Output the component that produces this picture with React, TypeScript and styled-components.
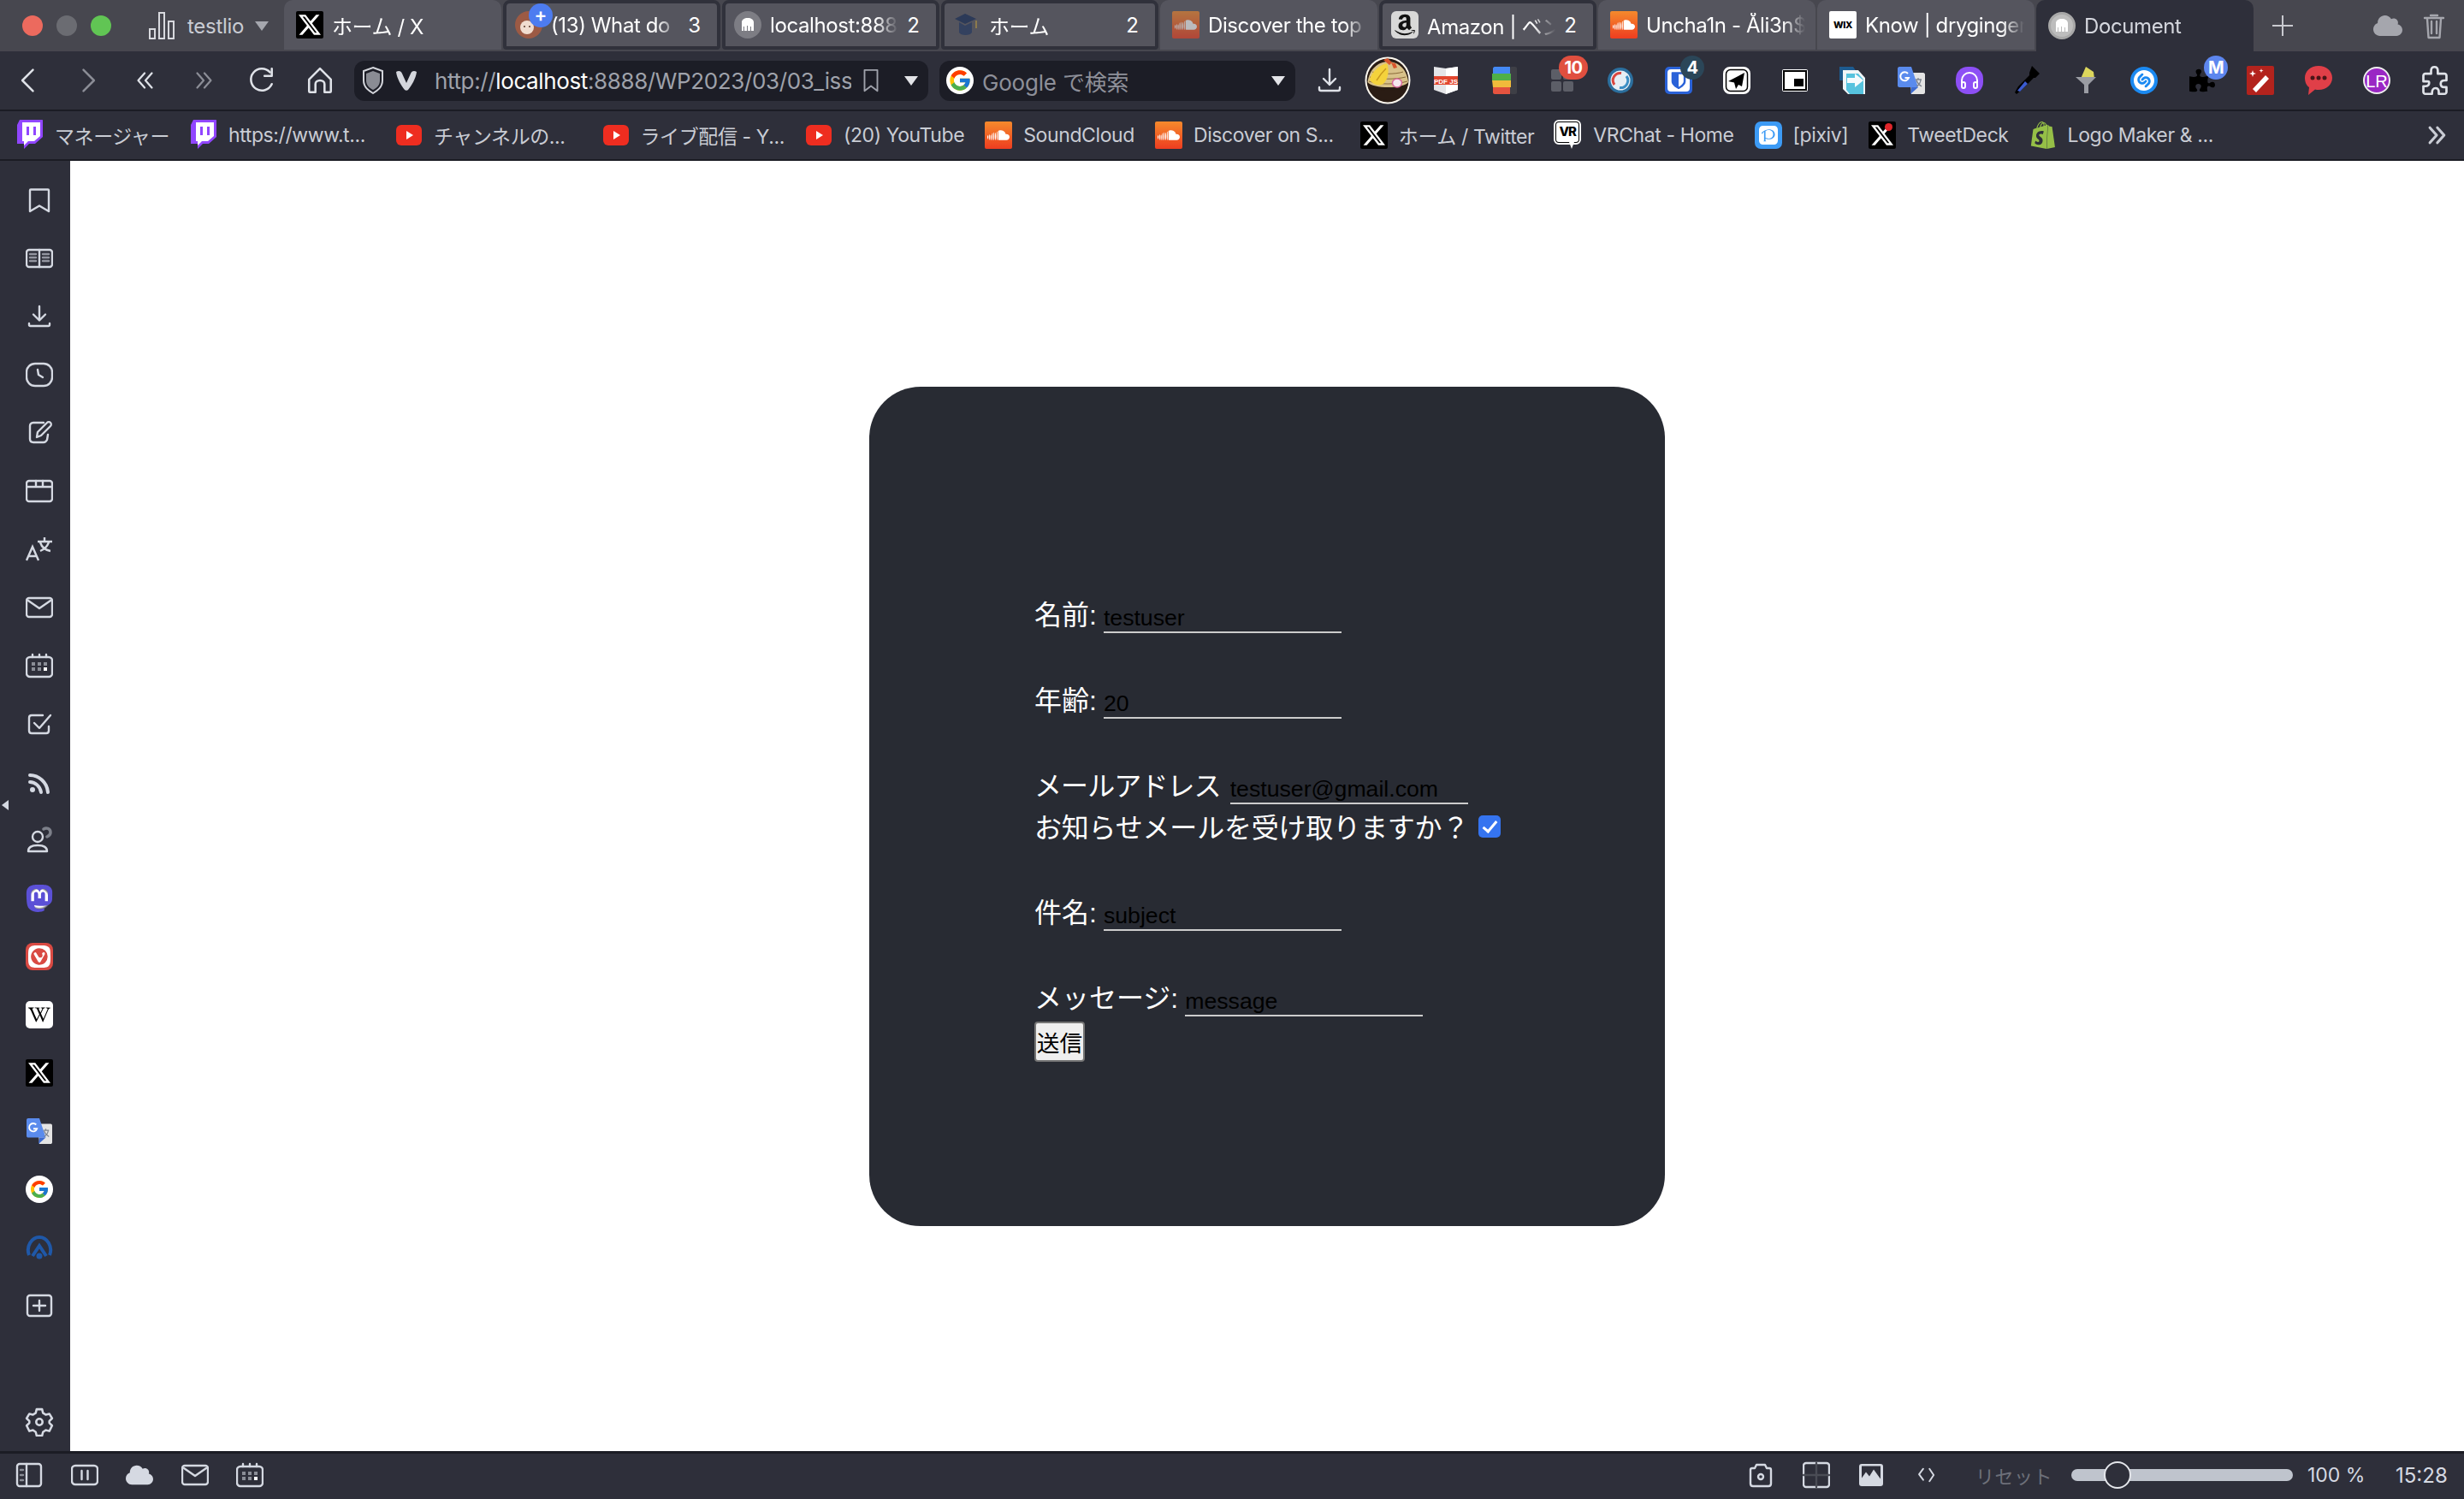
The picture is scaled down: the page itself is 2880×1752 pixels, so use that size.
import React from 'react';
import styled, { createGlobalStyle } from 'styled-components';
import { FcGoogle } from 'react-icons/fc';
import { FaAmazon, FaWikipediaW, FaPuzzlePiece, FaCloud } from 'react-icons/fa';
import { SiBitwarden, SiMastodon, SiPixiv, SiShazam, SiShopify, SiSoundcloud, SiVivaldi, SiX } from 'react-icons/si';

const GlobalStyle = createGlobalStyle`
    html, body { margin: 0; padding: 0; background: #fff; }
    body { font-family: Inter, "Noto Sans CJK JP", sans-serif; }
`;

const Root = styled.div`
    width: 2880px;
    height: 1752px;
    display: flex;
    flex-direction: column;
    overflow: hidden;
    background: #2e2f3a;
`;

/* tab strip */
const TabStrip = styled.div`
    height: 60px;
    flex: none;
    display: flex;
    gap: 2px;
    background: #47474f;
    color: #fff;
`;

const Lead = styled.div`
    width: 330px;
    flex: none;
    display: flex;
    align-items: center;
    padding-left: 26px;
    box-sizing: border-box;
`;

const Light = styled.span<{ $color: string }>`
    width: 24px;
    height: 24px;
    border-radius: 50%;
    margin-right: 16px;
    background: ${({ $color }) => $color};
`;

const WorkspaceBars = styled.svg`
    margin-left: 28px;
    flex: none;
`;

const WorkspaceName = styled.span`
    font-size: 24px;
    color: #c9ccd3;
    margin: 0 13px 0 15px;
    letter-spacing: -0.3px;
`;

const Caret = styled.span<{ $color?: string; $left?: number }>`
    width: 0;
    height: 0;
    margin-left: ${({ $left }) => $left || 0}px;
    border-left: 8px solid transparent;
    border-right: 8px solid transparent;
    border-top: 11px solid ${({ $color }) => $color || '#a5a7ae'};
    flex: none;
`;

const Tab = styled.div<{ $active?: boolean; $stack?: boolean }>`
    width: 254px;
    height: ${({ $active }) => ($active ? 60 : 58)}px;
    flex: none;
    box-sizing: border-box;
    display: flex;
    align-items: center;
    gap: 10px;
    position: relative;
    padding: 0 ${({ $stack }) => ($stack ? '19px' : '12px')} 0 ${({ $stack }) => ($stack ? '10px' : '14px')};
    border-radius: ${({ $stack }) => ($stack ? '8px 8px 4px 4px' : '10px 10px 0 0')};
    background: ${({ $active }) => ($active ? '#2e2f3a' : '#55555e')};
    border: ${({ $stack }) => ($stack ? '4px solid #30313b' : 'none')};
`;

const TabTitle = styled.span<{ $active?: boolean }>`
    flex: 1;
    min-width: 0;
    overflow: hidden;
    white-space: nowrap;
    font-size: 24px;
    letter-spacing: -0.4px;
    color: ${({ $active }) => ($active ? '#d5d7de' : '#fff')};
    -webkit-mask-image: linear-gradient(to right, #000 calc(100% - 26px), transparent 100%);
    mask-image: linear-gradient(to right, #000 calc(100% - 26px), transparent 100%);
`;

const TabCount = styled.span`
    font-size: 24px;
    color: #fff;
`;

const TabEnd = styled.div`
    flex: 1;
    display: flex;
    align-items: center;
    color: #cfd0d5;
`;

const PlusSign = styled.span`
    width: 32px;
    margin-left: 16px;
    display: flex;
    justify-content: center;
`;

const EndIcon = styled.span<{ $left: number }>`
    margin-left: ${({ $left }) => $left}px;
    display: flex;
    color: #a5a6ad;
`;

const PlusBadge = styled.span`
    position: absolute;
    left: 26px;
    top: 0;
    width: 28px;
    height: 28px;
    border-radius: 50%;
    background: #4d7cf0;
    color: #fff;
    font-size: 22px;
    line-height: 26px;
    text-align: center;
    font-weight: 600;
`;

/* favicons */
const Fav = styled.span<{ $bg?: string; $color?: string; $radius?: string; $dim?: boolean; $height?: number; $ring?: boolean }>`
    width: 32px;
    height: ${({ $height }) => $height || 32}px;
    flex: none;
    position: relative;
    box-sizing: border-box;
    display: inline-flex;
    align-items: center;
    justify-content: center;
    overflow: hidden;
    background: ${({ $bg }) => $bg || 'transparent'};
    color: ${({ $color }) => $color || '#fff'};
    border-radius: ${({ $radius }) => $radius || '2px'};
    border: ${({ $ring }) => ($ring ? '3px solid #a8a8a8' : 'none')};
    opacity: ${({ $dim }) => ($dim ? 0.6 : 1)};
`;

const WixMark = styled.span`
    font-size: 11px;
    font-weight: 800;
    color: #000;
    letter-spacing: -0.4px;
`;

const DotMark = styled.span`
    position: absolute;
    right: 4px;
    top: 2px;
    width: 9px;
    height: 9px;
    border-radius: 50%;
    background: #e0262b;
`;

const XFav = ({ dot }: { dot?: boolean }) => (
    <Fav $bg="#000">
        <SiX size={26} />
        {dot ? <DotMark /> : null}
    </Fav>
);

const Soundcloud = ({ dim }: { dim?: boolean }) => (
    <Fav $bg="linear-gradient(#f58a2c, #ee3d20)" $dim={dim}>
        <SiSoundcloud size={26} />
    </Fav>
);

const Elephant = ({ active }: { active?: boolean }) => (
    <Fav $radius="50%" $bg={active ? '#bdbdbd' : '#7d7d84'} $ring={active}>
        <svg width="20" height="20" viewBox="0 0 20 20" fill="#fff">
            <path d="M3 17V7c0-3 3-5 7-5s7 2 7 5v10h-3v-5h-1v5h-3v-6H9v6H6v-5H5v5z" />
        </svg>
    </Fav>
);

const GradCap = () => (
    <Fav>
        <svg width="32" height="32" viewBox="0 0 32 32">
            <path d="M2 9l12-6 13 6-13 6z" fill="#2c3a58" />
            <path d="M7 13l7 4 8-4v12c-2 4-13 4-15 0z" fill="#33415f" />
            <path d="M27 11v9" stroke="#8c7a4c" strokeWidth="2" />
        </svg>
    </Fav>
);

const Twitch = () => (
    <Fav $height={36} $color="#9146ff">
        <svg width="30" height="36" viewBox="0 0 30 36">
            <path d="M3 0h27v20l-9 8h-7l-6 6v-6H0V6z" fill="#9146ff" />
            <path d="M6 3h21v16l-7 6h-7l-5 5v-5H6z" fill="#fff" />
            <path d="M11 8h3v10h-3zM19 8h3v10h-3z" fill="#9146ff" />
        </svg>
    </Fav>
);

const YouTube = () => (
    <Fav>
        <svg width="30" height="24" viewBox="0 0 30 24">
            <rect width="30" height="24" rx="6" fill="#ee2d20" />
            <path d="M12 7l8 5-8 5z" fill="#fff" />
        </svg>
    </Fav>
);

const VrFav = styled.span`
    width: 32px;
    height: 34px;
    flex: none;
    position: relative;
    display: flex;
    align-items: flex-start;
`;

const VrMark = styled.span`
    width: 30px;
    height: 27px;
    box-sizing: border-box;
    border: 2px solid #000;
    outline: 2px solid #fff;
    outline-offset: -1px;
    border-radius: 5px;
    background: #fff;
    color: #000;
    font-size: 15px;
    font-weight: 800;
    line-height: 22px;
    text-align: center;
    letter-spacing: -1px;
    &::after {
        content: '';
        position: absolute;
        left: 17px;
        top: 25px;
        border-left: 3px solid transparent;
        border-right: 3px solid transparent;
        border-top: 8px solid #fff;
    }
`;

/* toolbar */
const Toolbar = styled.div`
    height: 68px;
    flex: none;
    display: flex;
    align-items: center;
    border-bottom: 2px solid #1b1c24;
    background: #2e2f3a;
`;

const ToolCell = styled.span<{ $dim?: boolean; $left?: number }>`
    width: 68px;
    height: 68px;
    margin-left: ${({ $left }) => $left || 0}px;
    flex: none;
    position: relative;
    display: flex;
    align-items: center;
    justify-content: center;
    color: ${({ $dim }) => ($dim ? '#8b8d96' : '#dfe2e8')};
`;

const ToolBadge = styled.span<{ $bg: string; $wide?: boolean }>`
    position: absolute;
    top: 5px;
    right: 4px;
    width: ${({ $wide }) => ($wide ? 34 : 28)}px;
    height: 28px;
    border-radius: 14px;
    background: ${({ $bg }) => $bg};
    color: #fff;
    font-size: 20px;
    font-weight: 700;
    line-height: 28px;
    text-align: center;
    letter-spacing: -0.5px;
`;

const Field = styled.div<{ $width: number; $left: number }>`
    width: ${({ $width }) => $width}px;
    height: 47px;
    margin-left: ${({ $left }) => $left}px;
    flex: none;
    display: flex;
    align-items: center;
    box-sizing: border-box;
    padding: 0 12px 0 8px;
    border-radius: 12px;
    background: #1c1d26;
    font-size: 26px;
    letter-spacing: -0.2px;
    color: #9fa2ab;
`;

const ShieldIcon = styled.svg`
    flex: none;
`;

const VivaldiMark = styled.svg`
    flex: none;
    margin-left: 12px;
`;

const UrlText = styled.div`
    flex: 1;
    min-width: 0;
    margin: 0 8px 0 20px;
    overflow: hidden;
    white-space: nowrap;
    letter-spacing: -0.38px;
`;

const UrlHost = styled.span`
    color: #fff;
`;

const SearchHint = styled.div`
    flex: 1;
    margin-left: 10px;
    color: #8e9099;
`;

/* bookmarks */
const BookmarkBar = styled.div`
    height: 58px;
    flex: none;
    display: flex;
    align-items: center;
    gap: 24px;
    padding-left: 19px;
    background: #2e2f3a;
    position: relative;
    box-sizing: border-box;
    border-bottom: 2px solid #1b1c24;
`;

const Bookmark = styled.div<{ $trail?: number }>`
    display: flex;
    align-items: center;
    gap: 13px;
    flex: none;
    margin-right: ${({ $trail }) => $trail || 0}px;
    font-size: 23px;
    letter-spacing: -0.4px;
    color: #c9ccd4;
    white-space: nowrap;
`;

const MoreMarks = styled.span`
    position: absolute;
    right: 18px;
    top: 14px;
    color: #c9ccd4;
    display: flex;
`;

/* page */
const Middle = styled.div`
    flex: 1;
    min-height: 0;
    display: flex;
`;

const Sidebar = styled.div`
    width: 82px;
    flex: none;
    position: relative;
    display: flex;
    flex-direction: column;
    align-items: center;
    padding: 12px 0 0 10px;
    box-sizing: border-box;
    background: #2e2f3a;
    color: #d5d9e2;
`;

const SideCell = styled.span`
    width: 40px;
    height: 68px;
    flex: none;
    display: flex;
    align-items: center;
    justify-content: center;
`;

const SideBottom = styled(SideCell)`
    margin-top: auto;
`;

const CollapseArrow = styled.span`
    position: absolute;
    left: 2px;
    top: 747px;
    width: 0;
    height: 0;
    border-top: 6px solid transparent;
    border-bottom: 6px solid transparent;
    border-right: 8px solid #d5d9e2;
`;

const Page = styled.main`
    flex: 1;
    display: flex;
    align-items: center;
    justify-content: center;
    background: #fff;
`;

const Card = styled.div`
    width: 930px;
    height: 981px;
    margin-top: 1px;
    box-sizing: border-box;
    padding: 252px 0 0 193px;
    border-radius: 60px;
    background: #282b33;
    color: #fff;
    font-family: "Liberation Sans", "Noto Sans CJK JP", sans-serif;
    font-size: 32px;
`;

const Row = styled.label<{ $gap?: number }>`
    height: 36px;
    display: flex;
    align-items: flex-end;
    margin-bottom: ${({ $gap }) => ($gap === undefined ? 64 : $gap)}px;
    white-space: nowrap;
`;

const Caption = styled.span<{ $tight?: boolean }>`
    line-height: 36px;
    position: relative;
    top: -3px;
    letter-spacing: ${({ $tight }) => ($tight ? '-0.9px' : '0')};
`;

const TextInput = styled.input<{ $left?: number }>`
    width: 278px;
    height: 34px;
    margin: 0 0 0 ${({ $left }) => ($left === undefined ? 8 : $left)}px;
    padding: 0;
    box-sizing: border-box;
    border: 0;
    border-bottom: 2px solid #ccc;
    outline: 0;
    background: transparent;
    color: #000;
    font-family: "Liberation Sans", sans-serif;
    font-size: 26.67px;
    line-height: 32px;
`;

const CheckRow = styled.label`
    height: 48px;
    box-sizing: border-box;
    padding-top: 2px;
    display: flex;
    align-items: center;
    margin-bottom: 64px;
    white-space: nowrap;
    letter-spacing: -0.2px;
`;

const CheckBox = styled.input`
    appearance: none;
    width: 26px;
    height: 26px;
    margin: 2px 0 0 11px;
    border-radius: 5px;
    background: #3574f0;
    position: relative;
    &::after {
        content: '';
        position: absolute;
        left: 9px;
        top: 3px;
        width: 6px;
        height: 14px;
        border: solid #fff;
        border-width: 0 3px 3px 0;
        transform: rotate(40deg);
    }
`;

const SendButton = styled.button`
    display: block;
    width: 59px;
    height: 47px;
    margin-top: 6px;
    padding: 0;
    box-sizing: border-box;
    border: 2px solid #767676;
    border-radius: 4px;
    background: #efefef;
    color: #000;
    font-family: "Liberation Sans", "Noto Sans CJK JP", sans-serif;
    font-size: 26.67px;
`;

/* status bar */
const StatusBar = styled.div`
    height: 56px;
    flex: none;
    display: flex;
    align-items: center;
    box-sizing: border-box;
    padding: 0 0 3px 2px;
    border-top: 3px solid #1b1c24;
    background: #2e2f3a;
    color: #d5d9e2;
`;

const StatusCell = styled.span`
    width: 64.5px;
    flex: none;
    display: flex;
    justify-content: center;
`;

const StatusSpacer = styled.span`
    flex: 1;
`;

const ResetLabel = styled.span`
    width: 87px;
    margin: 0 25px;
    font-size: 22px;
    letter-spacing: 0.5px;
    color: #6d6f79;
    white-space: nowrap;
`;

const ZoomTrack = styled.span`
    width: 259px;
    height: 14px;
    flex: none;
    position: relative;
    border-radius: 7px;
    background: #bfc4cd;
`;

const ZoomThumb = styled.span`
    position: absolute;
    left: 38px;
    top: -9px;
    width: 32px;
    height: 32px;
    box-sizing: border-box;
    border-radius: 50%;
    border: 2px solid #e4e6eb;
    background: #2e2f3a;
`;

const ZoomValue = styled.span`
    margin-left: 17px;
    width: 103px;
    font-size: 23px;
    flex: none;
`;

const Clock = styled.span`
    width: 80px;
    font-size: 24px;
    flex: none;
`;

/* line icons, all drawn on a 32 box */
const Line = ({ children, size = 32, width = 2.4 }: { children: React.ReactNode; size?: number; width?: number }) => (
    <svg width={size} height={size} viewBox="0 0 32 32" fill="none" stroke="currentColor" strokeWidth={width} strokeLinecap="round" strokeLinejoin="round">
        {children}
    </svg>
);

const CalendarIcon = () => (
    <Line>
        <rect x="1" y="6" width="30" height="23" rx="4" />
        <path d="M8 3v3M16 3v3M24 3v3" />
        <path d="M7 14h4M14 14h4M21 14h4M7 20h4M14 20h4" stroke="#8a8d96" strokeWidth="4" strokeLinecap="butt" />
        <path d="M21 20h4" stroke="#fff" strokeWidth="4" strokeLinecap="butt" />
    </Line>
);

const MailIcon = () => (
    <Line>
        <rect x="1" y="5" width="30" height="22" rx="3" />
        <path d="M3 8l13 9 13-9" />
    </Line>
);

const sideIcons: React.ReactNode[] = [
    <Line key="bookmark"><path d="M6 3.500h20c.6 0 1 .4 1 1V29l-11-6.500L5 29V4.500c0-.6.4-1 1-1z" /></Line>,
    <Line key="reader"><rect x="1" y="6" width="30" height="20" rx="3" /><path d="M16 6v20" /><path d="M5 11h7M5 15h7M5 19h7M20 11h7M20 15h7M20 19h7" opacity=".6" /></Line>,
    <Line key="download"><path d="M16 4v16M9 13.500l7 7 7-7M4 24v1.500c0 1 .6 1.500 1.500 1.500h21c.9 0 1.500-.5 1.500-1.500V24" /></Line>,
    <Line key="history"><rect x="1" y="3" width="30" height="26" rx="10" /><path d="M14 10l1 6 5 3" /></Line>,
    <Line key="notes"><path d="M21 4H9C6 4 5 6 5 8v15c0 3 2 4 4 4h12c2 0 3-1 4-3l1-6" /><path d="M13 21l1-6L25 4c1-1 3-1 4 0s1 3 0 4L18 19z" /></Line>,
    <Line key="window"><rect x="1" y="4" width="30" height="24" rx="3" /><path d="M1 11h30M12 4v7M20 4v7" /></Line>,
    <svg key="translate" width="32" height="32" viewBox="0 0 32 32" fill="none" stroke="currentColor" strokeWidth="2.400"><path d="M1 29l7-16 7 16M3.500 24h9" /><path d="M14 7h17M22 2v5M17 8c2 6 6 9 12 10M27 8c-2 5-5 8-10 10" /></svg>,
    <MailIcon key="mail" />,
    <CalendarIcon key="calendar" />,
    <Line key="tasks"><path d="M20 6H7c-2 0-3 1-3 3v15c0 2 1 3 3 3h17c2 0 3-1 3-3v-5" /><path d="M10 15l6 6L29 6" /></Line>,
    <Line key="rss" width={4}><path d="M5 8c10 0 20 8 21 20M5 16c6 0 12 5 13 12" /><circle cx="8" cy="25" r="3" fill="currentColor" stroke="none" /></Line>,
    <Line key="contacts"><circle cx="14" cy="12" r="6" /><path d="M3 29c0-6 5-7 11-7s11 1 11 7z" /><path d="M21 3c3-2 8-1 8 4 0 2-2 4-4 5" stroke="#7d808a" strokeWidth="3.500" /></Line>,
];

const Translate = ({ size = 32 }: { size?: number }) => (
    <svg width={size} height={size} viewBox="0 0 32 32">
        <path d="M14 7h16c1 0 2 1 2 2v21c0 1-1 2-2 2H16z" fill="#e4e4e4" />
        <path d="M2 0h14l8 24H2c-1 0-2-1-2-2V2C0 1 1 0 2 0z" fill="#5a8bed" />
        <path d="M16 24l-1 8 9-8z" fill="#3e6bd0" />
        <path d="M12 8A5 5 0 1 0 13 13H8.500" fill="none" stroke="#fff" strokeWidth="2" />
        <path d="M21 15h7M24 13v2M22 23c3-2 5-4 5-8M22 16c1 3 3 5 6 7" fill="none" stroke="#7d8490" strokeWidth="1.300" />
    </svg>
);

const Noodle = () => (
    <svg width="54" height="56" viewBox="0 0 54 56">
        <ellipse cx="27" cy="28" rx="26.500" ry="27.500" fill="#fbf7ee" />
        <ellipse cx="27" cy="28" rx="24.500" ry="25.500" fill="#2a1c14" />
        <path d="M3.500 30c2-15 12-24 24-24s22 9 23.500 24c-6 8-41 8-47.500 0z" fill="#d8c28a" />
        <path d="M6 24c10 3 30 3 42 0M5 29c12 4 32 4 45 0M9 18c9 3 27 3 36 0" fill="none" stroke="#8a6a3a" strokeWidth="1" />
        <path d="M6 27c2-9 11-17 20-19 3 7 2 18-4 24-5 3-13 1-16-5z" fill="#f4d23c" />
        <path d="M14 28c3-5 7-10 11-14" fill="none" stroke="#c99a1f" strokeWidth="1.500" />
        <path d="M22 4l5-2 5 5-3 3zM31 7l5 1 2 5-4 1z" fill="#d8562c" />
        <ellipse cx="38" cy="31" rx="5.500" ry="5" fill="#f6e7ee" stroke="#d9689c" strokeWidth="1.500" />
        <path d="M5 35c8 6 36 6 44 0-2 9-10 16-22 16S7 44 5 35z" fill="#2a1c14" />
    </svg>
);

const PdfJs = () => (
    <svg width="30" height="34" viewBox="0 0 30 34">
        <path d="M1 1l14 2 14-2v27l-14 5-14-5z" fill="#e4e5e8" />
        <path d="M15 3l14-2v27l-14 5z" fill="#fff" />
        <rect x="1" y="12" width="28" height="10" fill="#e2472f" />
        <text x="15" y="20.500" textAnchor="middle" fontSize="8" fontWeight="700" fill="#fff" fontFamily="Liberation Sans">PDF JS</text>
    </svg>
);

const ColorStack = () => (
    <svg width="30" height="32" viewBox="0 0 30 32">
        <rect x="22" y="0" width="8" height="32" rx="2" fill="#3e3f46" />
        <path d="M2 2c0-1 1-2 2-2h18v8H2z" fill="#4489f4" />
        <path d="M1 8h22v8H1z" fill="#4fb048" />
        <path d="M1 16h22v8H2z" fill="#f1bb3b" />
        <path d="M2 24h20v8H4c-1 0-2-1-2-2z" fill="#e5533f" />
    </svg>
);

const Tiles = () => (
    <svg width="28" height="28" viewBox="0 0 28 28" fill="#5c5e67">
        <rect x="1" y="1" width="12" height="12" rx="2" />
        <rect x="15" y="1" width="12" height="12" rx="2" />
        <rect x="1" y="15" width="12" height="12" rx="2" />
        <rect x="15" y="15" width="12" height="12" rx="2" />
    </svg>
);

const RoundSync = () => (
    <svg width="32" height="32" viewBox="0 0 32 32" fill="none">
        <circle cx="16" cy="16" r="15" fill="#2b6f9e" />
        <circle cx="16" cy="16" r="11.500" fill="#e6eef4" />
        <path d="M9 21a8.500 8.500 0 0 1 8-13.500" stroke="#d9473f" strokeWidth="3" />
        <path d="M23 11a8.500 8.500 0 0 1-8 13.500" stroke="#3c8ec4" strokeWidth="3" />
    </svg>
);

const PlaneBox = () => (
    <svg width="32" height="32" viewBox="0 0 32 32">
        <rect x="1" y="1" width="30" height="30" rx="7" fill="#fff" stroke="#fff" strokeWidth="2" />
        <rect x="3.500" y="3.500" width="25" height="25" rx="5" fill="#fff" stroke="#000" strokeWidth="1.500" />
        <path d="M25 7L6 17l7 1.500L15 26l3-5 4 2z" fill="#000" />
    </svg>
);

const PipBox = () => (
    <svg width="32" height="28" viewBox="0 0 32 28">
        <rect x="1" y="1" width="30" height="26" rx="2" fill="#fff" />
        <rect x="3" y="3" width="26" height="22" fill="#fff" stroke="#000" strokeWidth="2" />
        <rect x="15" y="12" width="11" height="9" fill="#000" />
    </svg>
);

const ArrowDoc = () => (
    <svg width="32" height="32" viewBox="0 0 32 32">
        <path d="M0 0h16l4 6H4v10H0z" fill="#1d5b8f" />
        <path d="M4 4h18l8 9v19H10L4 26z" fill="#f0f6f8" />
        <path d="M8 8h14l6 7v17H12l-4-5z" fill="#56c3de" />
        <path d="M9 13h9V8l10 8-10 8v-5H9z" fill="#f4fbfd" />
    </svg>
);

const Headphones = () => (
    <svg width="22" height="22" viewBox="0 0 22 22" fill="none" stroke="#fff" strokeWidth="2">
        <path d="M2 14v-3a9 9 0 0 1 18 0v3" />
        <rect x="2" y="13" width="4" height="7" rx="2" />
        <rect x="16" y="13" width="4" height="7" rx="2" />
    </svg>
);

const Dropper = () => (
    <svg width="32" height="34" viewBox="0 0 32 34">
        <path d="M21 0l9 9-5 5-2 0L9 28l-6 5-2-2 4-7L18 11v-3z" fill="#000" />
        <path d="M13 18l3 3-9 9-3-1z" fill="#3b5bd0" />
    </svg>
);

const Funnel = () => (
    <svg width="24" height="32" viewBox="0 0 24 32">
        <path d="M12 0l9 6 1 8H6z" fill="#dcd65c" />
        <path d="M0 12h24l-9 9v10h-5V21z" fill="#9a9ca3" />
    </svg>
);

const WandBox = () => (
    <svg width="32" height="34" viewBox="0 0 32 34">
        <rect width="32" height="34" rx="2" fill="#b3231d" />
        <path d="M22 11l4 4-15 16-4-4z" fill="#fff" />
        <path d="M7 5l1 3 3 1-3 1-1 3-1-3-3-1 3-1zM17 3l.6 2 2 .6-2 .6-.6 2-.6-2-2-.6 2-.6z" fill="#fff" />
    </svg>
);

const ChatBubble = () => (
    <svg width="34" height="38" viewBox="0 0 34 38">
        <path d="M17 2c9 0 16 6 16 14s-7 14-16 14c-1 0-3 0-4-.5L5 36l1-9c-3-2-5-6-5-11C1 8 8 2 17 2z" fill="#e03f48" />
        <circle cx="10" cy="16" r="2.500" fill="#4a1518" />
        <circle cx="17" cy="16" r="2.500" fill="#4a1518" />
        <circle cx="24" cy="16" r="2.500" fill="#4a1518" />
    </svg>
);

const LrBadge = () => (
    <svg width="32" height="34" viewBox="0 0 32 34">
        <circle cx="16" cy="17" r="15" fill="#9a27c4" stroke="#eee" strokeWidth="2" />
        <text x="16" y="25" textAnchor="middle" fontSize="20" fill="#fff" fontFamily="Liberation Sans">LR</text>
    </svg>
);

const Avatar = () => (
    <Fav $radius="50%" $bg="#9c5a44">
        <svg width="32" height="32" viewBox="0 0 32 32">
            <circle cx="14" cy="19" r="8" fill="#f1ddd0" />
            <circle cx="11" cy="18" r="1" fill="#5a3a2c" />
            <circle cx="17" cy="18" r="1" fill="#5a3a2c" />
        </svg>
    </Fav>
);

interface TabData {
    title: string;
    icon: React.ReactNode;
    count?: number;
    badge?: boolean;
}

const tabs: TabData[] = [
    { title: 'ホーム / X', icon: <XFav /> },
    { title: '(13) What do', icon: <Avatar />, count: 3, badge: true },
    { title: 'localhost:888', icon: <Elephant />, count: 2 },
    { title: 'ホーム', icon: <GradCap />, count: 2 },
    { title: 'Discover the top s', icon: <Soundcloud dim /> },
    { title: 'Amazon | ベン', icon: <Fav $bg="#d8d8d8" $color="#111" $radius="6px"><FaAmazon size={28} /></Fav>, count: 2 },
    { title: 'Uncha1n - Åli3n$', icon: <Soundcloud /> },
    { title: 'Know | drygingerr', icon: <Fav $bg="#fff"><WixMark>WIX</WixMark></Fav> },
];

const bookmarks: { label: string; icon: React.ReactNode; trail?: number }[] = [
    { label: 'マネージャー', icon: <Twitch /> },
    { label: 'https://www.t...', icon: <Twitch />, trail: 11 },
    { label: 'チャンネルの...', icon: <YouTube />, trail: 19 },
    { label: 'ライブ配信 - Y...', icon: <YouTube /> },
    { label: '(20) YouTube', icon: <YouTube /> },
    { label: 'SoundCloud', icon: <Soundcloud /> },
    { label: 'Discover on S...', icon: <Soundcloud />, trail: 7 },
    { label: 'ホーム / Twitter', icon: <XFav /> },
    { label: 'VRChat - Home', icon: <VrFav><VrMark>VR</VrMark></VrFav> },
    { label: '[pixiv]', icon: <Fav $bg="#3d9bf5" $radius="7px"><SiPixiv size={22} /></Fav> },
    { label: 'TweetDeck', icon: <XFav dot /> },
    { label: 'Logo Maker & ...', icon: <Fav $color="#95bf47"><SiShopify size={32} /></Fav> },
];

const App: React.FC = () => (
    <Root>
        <GlobalStyle />
        <TabStrip>
            <Lead>
                <Light $color="#ec6a5e" />
                <Light $color="#6b6c72" />
                <Light $color="#61c554" />
                <WorkspaceBars width="30" height="32" viewBox="0 0 30 32" fill="none" stroke="#d8d9de" strokeWidth="2">
                    <rect x="1" y="20" width="6" height="11" />
                    <rect x="12" y="1" width="6" height="30" />
                    <rect x="23" y="11" width="6" height="20" />
                </WorkspaceBars>
                <WorkspaceName>testlio</WorkspaceName>
                <Caret />
            </Lead>
            {tabs.map((tab) => (
                <Tab key={tab.title} $stack={tab.count !== undefined}>
                    {tab.icon}
                    {tab.badge ? <PlusBadge>+</PlusBadge> : null}
                    <TabTitle>{tab.title}</TabTitle>
                    {tab.count !== undefined ? <TabCount>{tab.count}</TabCount> : null}
                </Tab>
            ))}
            <Tab $active>
                <Elephant active />
                <TabTitle $active>Document</TabTitle>
            </Tab>
            <TabEnd>
                <PlusSign>
                    <svg width="24" height="24" viewBox="0 0 24 24" stroke="#c9cad0" strokeWidth="2"><path d="M12 0v24M0 12h24" /></svg>
                </PlusSign>
                <EndIcon $left={90}><FaCloud size={34} /></EndIcon>
                <EndIcon $left={21}>
                    <Line><path d="M8 8l1.500 22h13L24 8M5 7h22M12 4h8M13 11v14M19 11v14" /></Line>
                </EndIcon>
            </TabEnd>
        </TabStrip>
        <Toolbar>
            <ToolCell><Line size={36} width={2.2}><path d="M20 5L9 16l11 11" /></Line></ToolCell>
            <ToolCell $dim><Line size={36} width={2.2}><path d="M12 5l11 11-11 11" /></Line></ToolCell>
            <ToolCell><Line size={30}><path d="M15 7l-8 9 8 9M24 7l-8 9 8 9" /></Line></ToolCell>
            <ToolCell $dim><Line size={30}><path d="M8 7l8 9-8 9M17 7l8 9-8 9" /></Line></ToolCell>
            <ToolCell><Line size={34}><path d="M25 7a12 12 0 1 0 2 13" /><path d="M27 3v8h-8" /></Line></ToolCell>
            <ToolCell><Line size={34}><path d="M16 3L4 15v13c0 1 1 1 1 1h6v-9c0-2 2-4 5-4s5 2 5 4v9h6s1 0 1-1V15z" /></Line></ToolCell>
            <Field $width={671} $left={6}>
                <ShieldIcon width="28" height="34" viewBox="0 0 28 34" fill="none" stroke="#d4d6dc" strokeWidth="2"><path d="M14 2l11 4v11c0 8-6 12-11 15C9 29 3 25 3 17V6z" /><path d="M14 6l8 3v8c0 6-4 9-8 11-4-2-8-5-8-11V9z" fill="#8a8c94" stroke="none" /></ShieldIcon>
                <VivaldiMark width="26" height="26" viewBox="0 0 26 26" fill="#d4d6dc"><path d="M1 3c3-2 6-1 7 2l5 11 5-11c1-3 4-4 7-2-1 8-6 16-10 21-1 1-3 1-4 0C7 19 2 11 1 3z" /></VivaldiMark>
                <UrlText>http://<UrlHost>localhost</UrlHost>:8888/WP2023/03/03_issu</UrlText>
                <Line size={30} width={2}><path d="M8 3h16v26l-8-6-8 6z" /></Line>
                <Caret $color="#e3e4e8" $left={24} />
            </Field>
            <Field $width={416} $left={13}>
                <Fav $radius="50%" $bg="#fff"><FcGoogle size={28} /></Fav>
                <SearchHint>Google で検索</SearchHint>
                <Caret $color="#e3e4e8" />
            </Field>
            <ToolCell $left={6}><Line><path d="M16 3v18M9 14l7 7 7-7M4 24v2c0 1 1 2 2 2h20c1 0 2-1 2-2v-2" /></Line></ToolCell>
            <ToolCell><Noodle /></ToolCell>
            <ToolCell><PdfJs /></ToolCell>
            <ToolCell><ColorStack /></ToolCell>
            <ToolCell><Tiles /><ToolBadge $bg="#e04f3f" $wide>10</ToolBadge></ToolCell>
            <ToolCell><RoundSync /></ToolCell>
            <ToolCell><Fav $bg="#2a62d8" $radius="5px"><SiBitwarden size={26} /></Fav><ToolBadge $bg="#2b4658">4</ToolBadge></ToolCell>
            <ToolCell><PlaneBox /></ToolCell>
            <ToolCell><PipBox /></ToolCell>
            <ToolCell><ArrowDoc /></ToolCell>
            <ToolCell><Translate /></ToolCell>
            <ToolCell><Fav $radius="14px" $bg="#8d4ff5"><Headphones /></Fav></ToolCell>
            <ToolCell><Dropper /></ToolCell>
            <ToolCell><Funnel /></ToolCell>
            <ToolCell><Fav $radius="50%" $bg="#1b8af2"><SiShazam size={24} /></Fav></ToolCell>
            <ToolCell><Fav $color="#000"><FaPuzzlePiece size={30} /></Fav><ToolBadge $bg="#5d86ee">M</ToolBadge></ToolCell>
            <ToolCell><WandBox /></ToolCell>
            <ToolCell><ChatBubble /></ToolCell>
            <ToolCell><LrBadge /></ToolCell>
            <ToolCell><Line size={36}><path d="M12 6c0-3 1.500-4 3.500-4S19 3 19 6v3h7c1 0 2 1 2 2v5h-2c-3 0-4 1.500-4 3.500s1 3.500 4 3.500h2v5c0 1-1 2-2 2h-6v-2c0-3-1.500-4-3.500-4S13 26 13 29v1H6c-1 0-2-1-2-2v-6h2c3 0 4-1.500 4-3.500S9 17 6 17H4v-6c0-1 1-2 2-2h6z" /></Line></ToolCell>
        </Toolbar>
        <BookmarkBar>
            {bookmarks.map((mark) => (
                <Bookmark key={mark.label} $trail={mark.trail}>
                    {mark.icon}
                    {mark.label}
                </Bookmark>
            ))}
            <MoreMarks><Line size={28} width={3.6}><path d="M7 6l9 10-9 10M17 6l9 10-9 10" /></Line></MoreMarks>
        </BookmarkBar>
        <Middle>
            <Sidebar>
                {sideIcons.map((icon, i) => <SideCell key={i}>{icon}</SideCell>)}
                <SideCell><Fav $color="#5b50d6" $bg="radial-gradient(#fff 45%, transparent 60%)"><SiMastodon size={32} /></Fav></SideCell>
                <SideCell><Fav $bg="#d94a43" $radius="8px"><SiVivaldi size={26} /></Fav></SideCell>
                <SideCell><Fav $bg="#fff" $color="#000" $radius="5px"><FaWikipediaW size={26} /></Fav></SideCell>
                <SideCell><XFav /></SideCell>
                <SideCell><Translate size={30} /></SideCell>
                <SideCell><Fav $radius="50%" $bg="#fff"><FcGoogle size={24} /></Fav></SideCell>
                <SideCell>
                    <svg width="32" height="30" viewBox="0 0 32 30" fill="none" stroke="#1f58a8" strokeWidth="4"><path d="M4 24C0 14 7 3 16 3s16 11 12 21" /><path d="M8 25l8-12 8 12" /><circle cx="16" cy="25" r="3.500" fill="#1f58a8" stroke="none" /></svg>
                </SideCell>
                <SideCell><Line><rect x="2" y="4" width="28" height="24" rx="3" /><path d="M16 10v12M9 16h14" /></Line></SideCell>
                <SideBottom>
                    <Line size={34}><circle cx="16" cy="16" r="3.500" /><path d="M13 2h6l1 4 3 2 4-1 3 5-3 3v2l3 3-3 6-4-1-3 2-1 4h-6l-1-4-3-2-4 1-3-6 3-3v-2l-3-3 3-5 4 1 3-2z" /></Line>
                </SideBottom>
                <CollapseArrow />
            </Sidebar>
            <Page>
                <Card>
                    <form>
                        <Row>
                            <Caption>名前:</Caption>
                            <TextInput type="text" defaultValue="testuser" />
                        </Row>
                        <Row>
                            <Caption>年齢:</Caption>
                            <TextInput type="text" defaultValue="20" />
                        </Row>
                        <Row $gap={0}>
                            <Caption $tight>メールアドレス</Caption>
                            <TextInput type="text" defaultValue="testuser@gmail.com" $left={11} />
                        </Row>
                        <CheckRow>
                            お知らせメールを受け取りますか？
                            <CheckBox type="checkbox" defaultChecked />
                        </CheckRow>
                        <Row>
                            <Caption>件名:</Caption>
                            <TextInput type="text" defaultValue="subject" />
                        </Row>
                        <Row $gap={0}>
                            <Caption>メッセージ:</Caption>
                            <TextInput type="text" defaultValue="message" />
                        </Row>
                        <SendButton type="button">送信</SendButton>
                    </form>
                </Card>
            </Page>
        </Middle>
        <StatusBar>
            <StatusCell><Line><rect x="2" y="3" width="28" height="26" rx="3" /><path d="M13 3v26" /><path d="M6 10h3M6 16h3M6 22h3" stroke="#8a8d96" /></Line></StatusCell>
            <StatusCell><Line><rect x="1" y="5" width="30" height="22" rx="4" /><path d="M12.500 11v10M19.500 11v10" /></Line></StatusCell>
            <StatusCell><FaCloud size={32} /></StatusCell>
            <StatusCell><MailIcon /></StatusCell>
            <StatusCell><CalendarIcon /></StatusCell>
            <StatusSpacer />
            <StatusCell><Line><path d="M9 8l2-4h10l2 4h3c1 0 2 1 2 2v16c0 2-1 3-3 3H7c-2 0-3-1-3-3V10c0-1 1-2 2-2z" /><circle cx="16" cy="18" r="3" /></Line></StatusCell>
            <StatusCell><Line><rect x="1" y="2" width="30" height="28" rx="3" /><path d="M16 2v28M1 16h30" stroke="#4a4c55" /></Line></StatusCell>
            <StatusCell><svg width="32" height="32" viewBox="0 0 32 32" fill="currentColor"><path fillRule="evenodd" d="M5 3h22c2 0 3 1 3 3v20c0 2-1 3-3 3H5c-2 0-3-1-3-3V6c0-2 1-3 3-3zm0 2.500v14l5-7 4 5 5-8 8 11v-15z" /></svg></StatusCell>
            <StatusCell><Line size={26}><path d="M11 7l-6 8 6 8M20 7l6 9-6 9" /></Line></StatusCell>
            <ResetLabel>リセット</ResetLabel>
            <ZoomTrack><ZoomThumb /></ZoomTrack>
            <ZoomValue>100 %</ZoomValue>
            <Clock>15:28</Clock>
        </StatusBar>
    </Root>
);

export default App;
